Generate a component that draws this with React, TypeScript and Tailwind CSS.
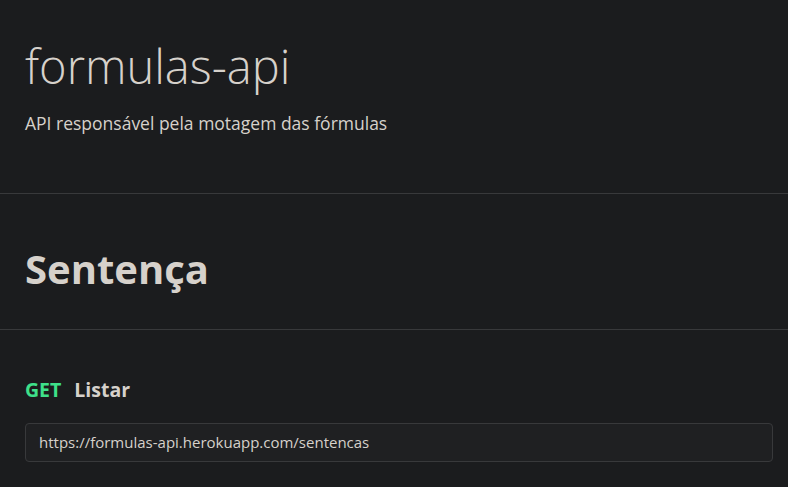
import React from 'react';

export default function App() {
  return (
    <div
      className="min-h-[487px] bg-[#1b1c1e] text-[#d6d1cb]"
      style={{ fontFamily: '"Open Sans", "Liberation Sans", sans-serif' }}
    >
      {/* Header */}
      <header className="px-[25px] pt-[34px] pb-[57px] border-b border-[#38393b]">
        <h1 className="text-[47px] font-light leading-[64px]">formulas-api</h1>
        <p className="mt-[12px] text-[17.5px] leading-[26px]">API responsável pela motagem das fórmulas</p>
      </header>

      {/* Section title */}
      <section className="px-[25px] pt-[51px] pb-[36px] border-b border-[#38393b]">
        <h2 className="text-[40px] font-bold leading-[48px]">Sentença</h2>
      </section>

      {/* Endpoint */}
      <section className="pl-[25px] pr-[15px] pt-[46px]">
        <div className="flex items-center gap-[13px] text-[19.5px] font-bold leading-[28px]">
          <span className="text-[#3ee08a]">GET</span>
          <span>Listar</span>
        </div>
        <div className="mt-[19px] h-[39px] flex items-center px-[13px] rounded-[4px] border border-[#38393b] bg-[#1f2022] text-[15px]">
          https://formulas-api.herokuapp.com/sentencas
        </div>
      </section>
    </div>
  );
}
